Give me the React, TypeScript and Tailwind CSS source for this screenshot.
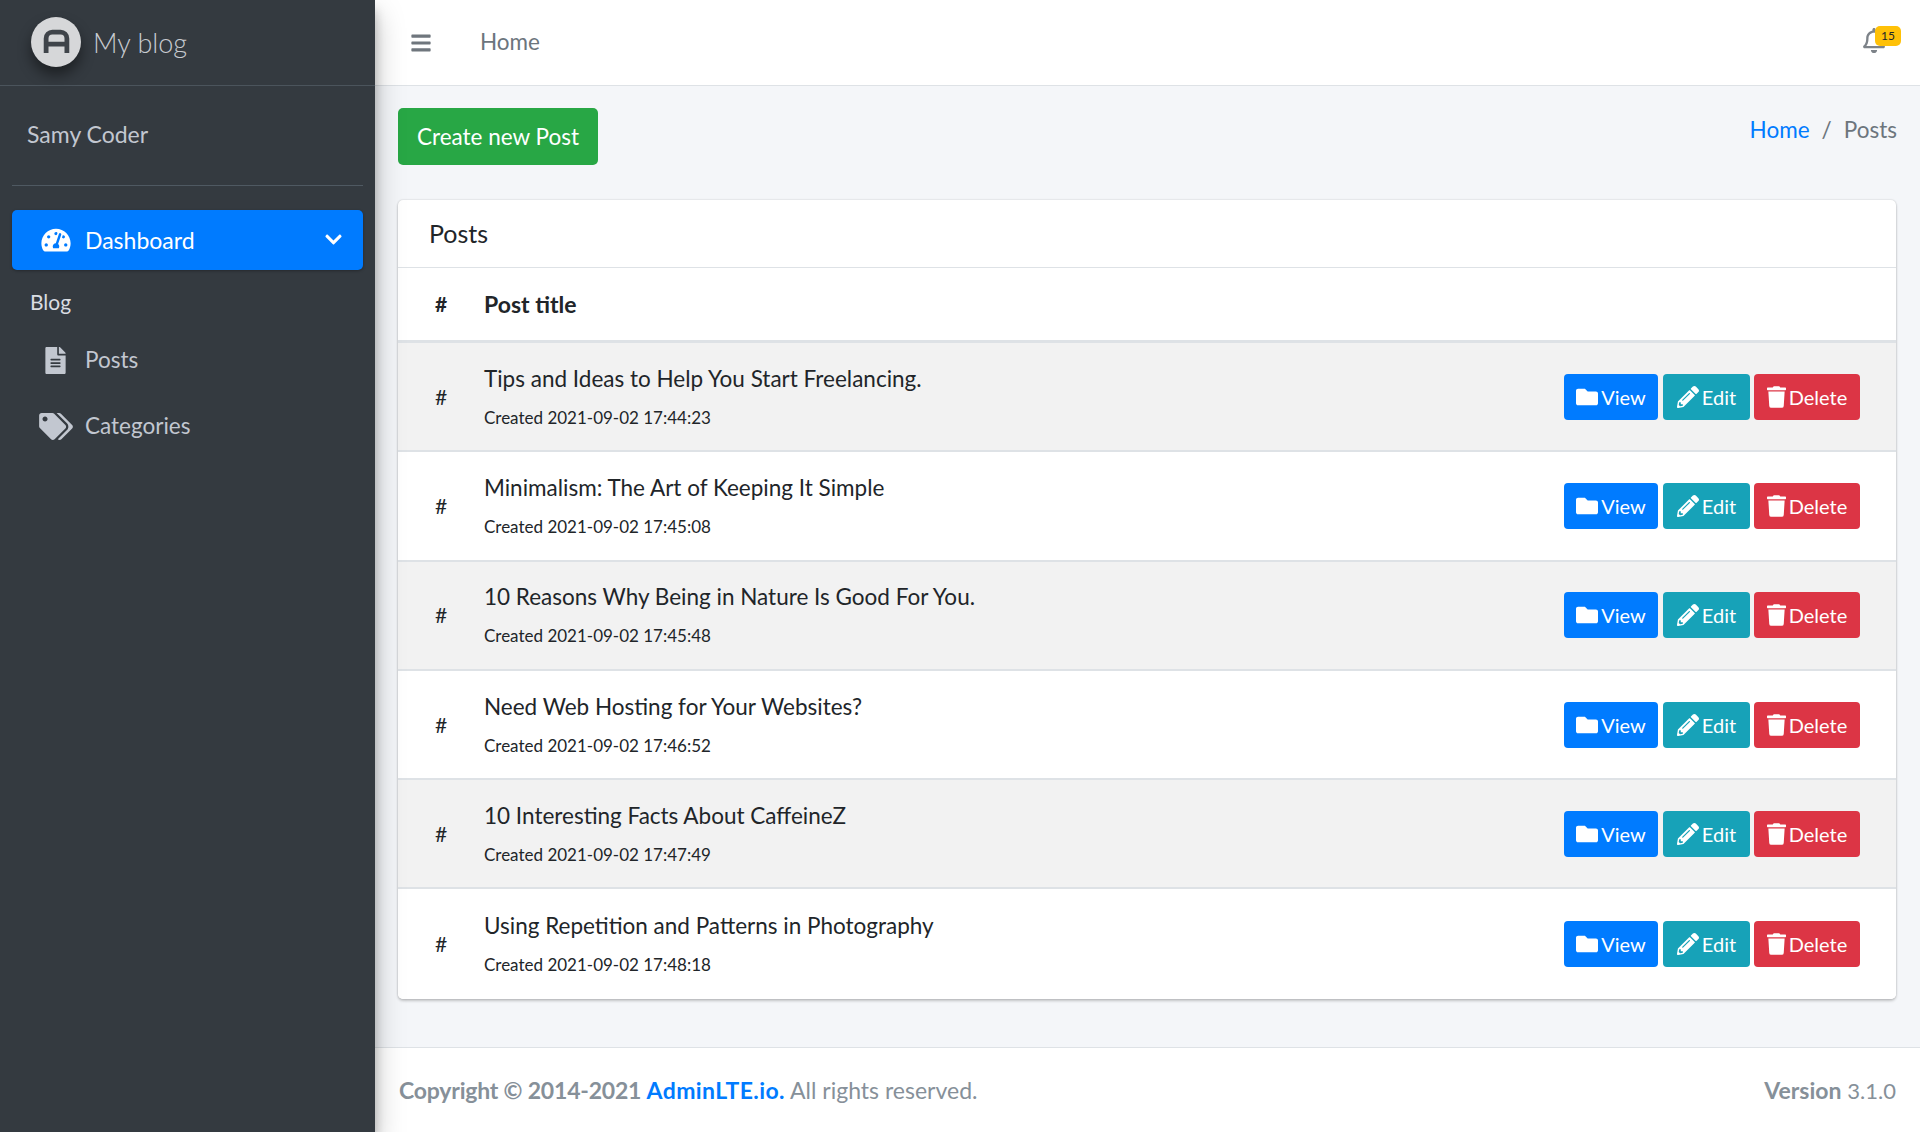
import React from 'react';
import { FaBars, FaChevronDown, FaFileAlt, FaFolder, FaPencilAlt, FaRegBell, FaTachometerAlt, FaTags, FaTrash } from 'react-icons/fa';

const posts = [
  { title: 'Tips and Ideas to Help You Start Freelancing.', created: '2021-09-02 17:44:23' },
  { title: 'Minimalism: The Art of Keeping It Simple', created: '2021-09-02 17:45:08' },
  { title: '10 Reasons Why Being in Nature Is Good For You.', created: '2021-09-02 17:45:48' },
  { title: 'Need Web Hosting for Your Websites?', created: '2021-09-02 17:46:52' },
  { title: '10 Interesting Facts About CaffeineZ', created: '2021-09-02 17:47:49' },
  { title: 'Using Repetition and Patterns in Photography', created: '2021-09-02 17:48:18' },
];

const Logo = () => (
  <div className="w-[50px] h-[50px] rounded-full bg-[#d6d7d9] flex items-center justify-center shadow-[0_8px_14px_rgba(0,0,0,0.45)]">
    <svg viewBox="0 0 26 24" className="w-[27px] h-[25px]" fill="none" stroke="#3f444a" strokeWidth="4.6">
      <path d="M3 23V9a6 6 0 0 1 6-6h8a6 6 0 0 1 6 6v14M3 14.5h20" />
    </svg>
  </div>
);

const Sidebar = () => (
  <aside className="w-[375px] shrink-0 bg-[#343a40] text-[#c2c7d0] shadow-[0_14px_28px_rgba(0,0,0,0.25),0_10px_10px_rgba(0,0,0,0.22)] relative z-10">
    <div className="h-[86px] border-b border-[#4b545c] flex items-center pl-[31px] pb-[2px]">
      <Logo />
      <span className="ml-[12px] mt-[3px] text-[27px] font-light text-[#c8cbd0]">My blog</span>
    </div>
    <div className="mx-3 h-[100px] border-b border-[#4f5962] flex items-center pl-[15px] pb-[2px] text-[23px]">Samy Coder</div>
    <div className="mx-3 mt-6 h-[60px] rounded-[5px] bg-[#007bff] text-white flex items-center pl-[29px] pr-[21px] shadow-[0_1px_3px_rgba(0,0,0,0.3)]">
      <FaTachometerAlt className="w-[30px] h-[26px]" />
      <span className="ml-[14px] text-[23px] flex-1">Dashboard</span>
      <FaChevronDown className="w-[19px] h-[19px] mb-[2px] mr-[-1px]" />
    </div>
    <div className="mt-[17px] pl-[30px] text-[21px] text-[#d9dde2] leading-[30px]">Blog</div>
    <div className="mt-[18px] h-[50px] flex items-center text-[22.5px]">
      <span className="w-[85px] flex justify-center pl-[26px]"><FaFileAlt className="w-[21px] h-[27px] text-[#c2c7d0]" /></span>
      <span>Posts</span>
    </div>
    <div className="mt-[16px] h-[50px] flex items-center text-[22.5px]">
      <span className="w-[85px] flex justify-center pl-[26px]"><FaTags className="w-[34px] h-[27px] text-[#c2c7d0]" /></span>
      <span>Categories</span>
    </div>
  </aside>
);

const Header = () => (
  <header className="h-[86px] shrink-0 bg-white border-b border-[#dee2e6] flex items-center pl-[35px] pr-[20px] text-[#6c757d]">
    <FaBars className="w-[22px] h-[22px] text-[#6f767d]" />
    <span className="ml-[48px] mb-[2px] text-[22.5px]">Home</span>
    <div className="ml-auto relative w-[36px] h-[36px] mr-[1px]">
      <FaRegBell className="absolute left-0 top-[3px] w-[22px] h-[25px] text-[#7d8389]" />
      <span className="absolute left-[12px] top-[1px] w-[26px] h-[20px] rounded-[5px] bg-[#ffc107] text-[#212529] text-[12px] flex items-center justify-center">15</span>
    </div>
  </header>
);

const ActionButton = ({ color, icon, label, width }: { color: string; icon: React.ReactNode; label: string; width: string }) => (
  <button className={`${color} ${width} h-[46px] rounded-[4px] text-white text-[20px] flex items-center justify-center gap-[3px]`}>
    {icon}
    {label}
  </button>
);

const PostRow = ({ post, striped }: { post: { title: string; created: string }; striped: boolean }) => (
  <div className={`h-[109.3px] border-b-2 last:border-b-0 border-[#dee2e6] flex items-center pl-[37px] pr-[36px] text-[#212529] ${striped ? 'bg-[#f2f2f2]' : 'bg-white'}`}>
    <span className="w-[49px] text-[21px] font-normal">#</span>
    <div className="flex-1">
      <div className="text-[22.5px] leading-[30px]">{post.title}</div>
      <div className="mt-[12px] text-[17px] leading-[24px]">Created {post.created}</div>
    </div>
    <div className="flex gap-[4px]">
      <ActionButton color="bg-[#007bff] mr-[1px]" width="w-[94px]" label="View" icon={<FaFolder className="w-[22px] h-[22px]" />} />
      <ActionButton color="bg-[#17a2b8]" width="w-[87px]" label="Edit" icon={<FaPencilAlt className="w-[22px] h-[22px]" />} />
      <ActionButton color="bg-[#dc3545]" width="w-[106px]" label="Delete" icon={<FaTrash className="w-[19px] h-[22px]" />} />
    </div>
  </div>
);

const App: React.FC = () => {
  return (
    <div className="flex h-[1132px] w-[1920px] overflow-hidden bg-[#f4f6f9] font-['Lato','Liberation_Sans',sans-serif]">
      <Sidebar />
      <main className="flex-1 flex flex-col min-w-0">
        <Header />
        <div className="flex-1 px-[23px] pt-[22px]">
          <div className="flex items-start justify-between">
            <button className="w-[200px] h-[57px] rounded-[5px] bg-[#28a745] text-white text-[22.5px]">Create new Post</button>
            <div className="mt-[5px] text-[22.5px] text-[#6c757d] flex">
              <span className="text-[#007bff]">Home</span>
              <span className="px-[12px]">/</span>
              <span>Posts</span>
            </div>
          </div>
          <section className="mt-[35px] mr-[1px] bg-white rounded-[5px] shadow-[0_0_2px_rgba(0,0,0,0.2),0_2px_3px_rgba(0,0,0,0.2)] overflow-hidden">
            <div className="h-[68px] border-b border-[#dee2e6] flex items-center pl-[31px] text-[25px] text-[#212529]">Posts</div>
            <div className="h-[75px] border-b-[3px] border-[#dee2e6] flex items-center pl-[37px] text-[#212529] font-bold text-[23px]">
              <span className="w-[49px] text-[21px]">#</span>
              <span>Post title</span>
            </div>
            {posts.map((post, idx) => (
              <PostRow key={idx} post={post} striped={idx % 2 === 0} />
            ))}
          </section>
        </div>
        <footer className="h-[85px] shrink-0 bg-white border-t border-[#dee2e6] flex items-center justify-between pl-[24px] pr-[24px] text-[23px] text-[#869099]">
          <div>
            <b className="tracking-[-0.2px]">Copyright © 2014-2021 <span className="text-[#007bff] tracking-[0.4px]">AdminLTE.io.</span></b> All rights reserved.
          </div>
          <div><b>Version</b> <span className="text-[22px]">3.1.0</span></div>
        </footer>
      </main>
    </div>
  );
};

export default App;
